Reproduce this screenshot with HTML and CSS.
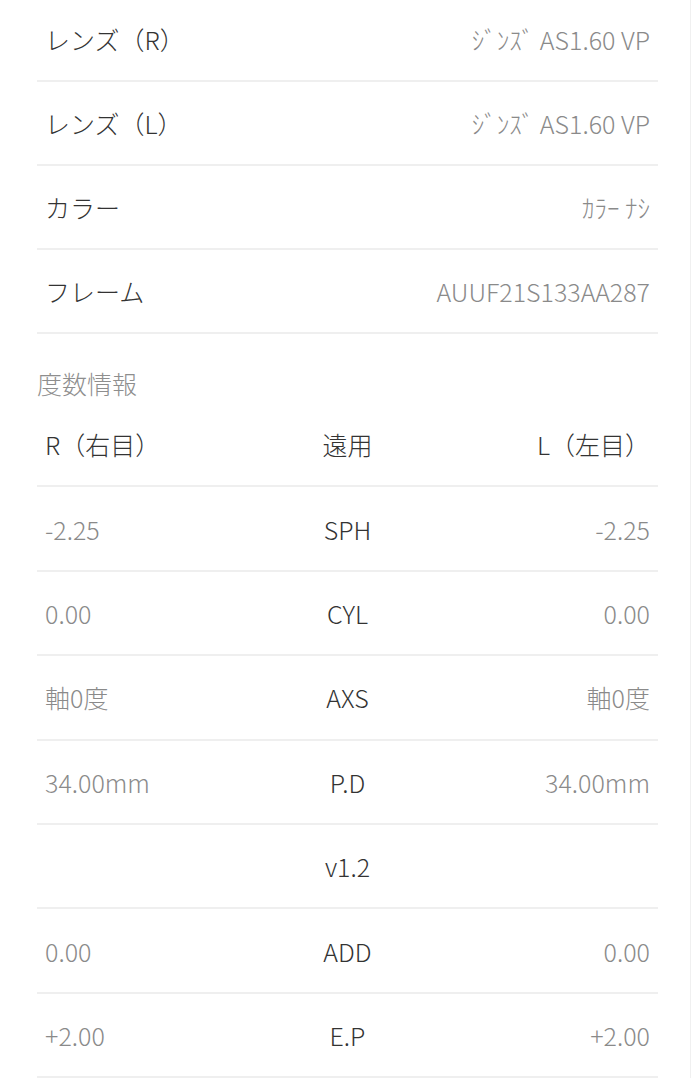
FILE: index.html
```html
<!DOCTYPE html>
<html lang="ja">
<head>
    <meta charset="utf-8">
    <title>注文詳細</title>
    <link rel="stylesheet" href="styles.css">
</head>
<body>
    <div class="page">
        <div class="info">
            <div class="info-row">
                <span class="label">レンズ（R）</span>
                <span class="value">ｼﾞﾝｽﾞ AS1.60 VP</span>
            </div>
            <div class="info-row">
                <span class="label">レンズ（L）</span>
                <span class="value">ｼﾞﾝｽﾞ AS1.60 VP</span>
            </div>
            <div class="info-row">
                <span class="label">カラー</span>
                <span class="value">ｶﾗｰ ﾅｼ</span>
            </div>
            <div class="info-row">
                <span class="label">フレーム</span>
                <span class="value">AUUF21S133AA287</span>
            </div>
        </div>

        <h2 class="section-title">度数情報</h2>
        <div class="rx">
            <div class="rx-row rx-head">
                <span class="left">R（右目）</span>
                <span class="mid">遠用</span>
                <span class="right">L（左目）</span>
            </div>
            <div class="rx-row">
                <span class="left">-2.25</span>
                <span class="mid">SPH</span>
                <span class="right">-2.25</span>
            </div>
            <div class="rx-row">
                <span class="left">0.00</span>
                <span class="mid">CYL</span>
                <span class="right">0.00</span>
            </div>
            <div class="rx-row">
                <span class="left">軸0度</span>
                <span class="mid">AXS</span>
                <span class="right">軸0度</span>
            </div>
            <div class="rx-row">
                <span class="left">34.00mm</span>
                <span class="mid">P.D</span>
                <span class="right">34.00mm</span>
            </div>
            <div class="rx-row">
                <span class="left"></span>
                <span class="mid">v1.2</span>
                <span class="right"></span>
            </div>
            <div class="rx-row">
                <span class="left">0.00</span>
                <span class="mid">ADD</span>
                <span class="right">0.00</span>
            </div>
            <div class="rx-row">
                <span class="left">+2.00</span>
                <span class="mid">E.P</span>
                <span class="right">+2.00</span>
            </div>
        </div>
    </div>
</body>
</html>
```

FILE: styles.css
```css
body {
    margin: 0;
    background-color: #fff;
    color: #333;
    font-family: "Noto Sans CJK JP", "Noto Sans", sans-serif;
    font-size: 25px;
    font-weight: 300;
}

.page {
    width: 691px;
    min-height: 1080px;
    border-right: 1px solid #f0f0f0;
    box-sizing: border-box;
    padding: 0 32px 0 37px;
}

/* 商品情報 */
.info {
    margin-top: -2px;
}

.info-row {
    display: flex;
    justify-content: space-between;
    align-items: center;
    height: 82px;
    padding: 0 8px;
    border-bottom: 2px solid #efefef;
}

.label {
    color: #333;
}

.value {
    color: #8a8a8a;
}

.section-title {
    margin: 0;
    padding-top: 34px;
    height: 35px;
    line-height: 30px;
    font-size: 25px;
    font-weight: 300;
    color: #8e8e8e;
}

/* 度数テーブル */
.rx-row {
    display: grid;
    grid-template-columns: 1fr 1fr 1fr;
    align-items: center;
    height: 82.4px;
    padding: 0 8px;
    border-bottom: 2px solid #efefef;
    color: #8a8a8a;
}

.rx-row .mid {
    text-align: center;
    color: #333;
}

.rx-row .right {
    text-align: right;
}

.rx-head {
    color: #333;
}
```
